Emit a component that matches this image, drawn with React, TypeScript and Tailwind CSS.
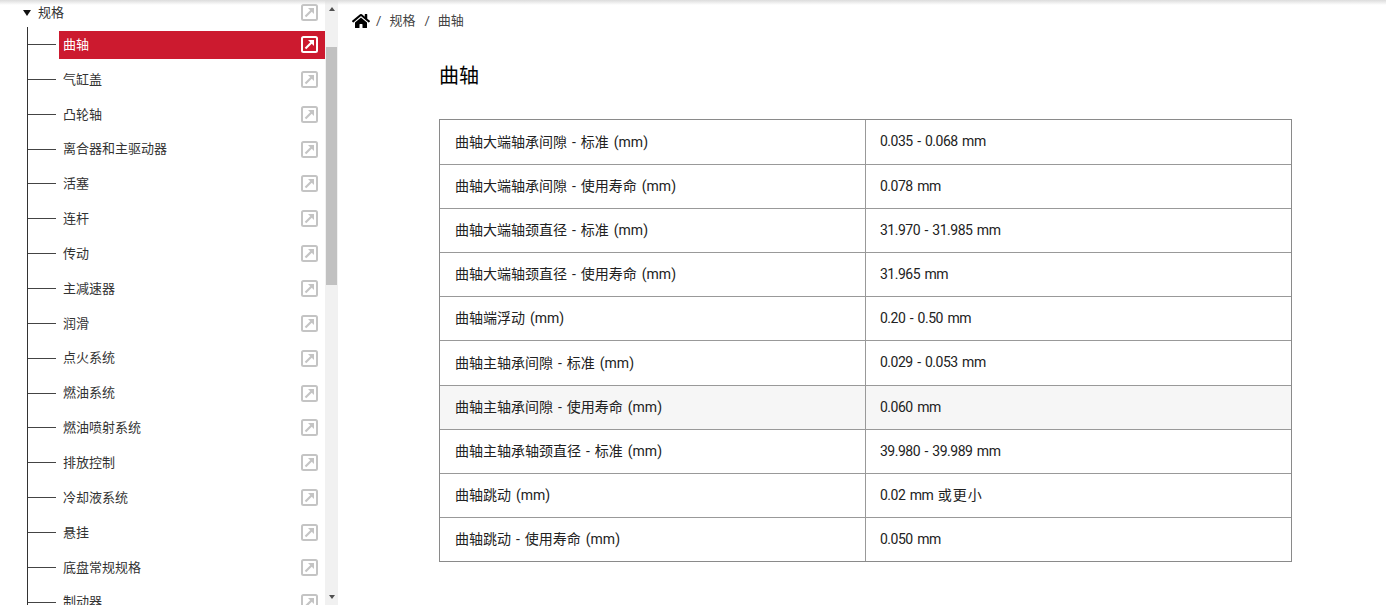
import type { ReactNode } from "react";
import { FaHome } from "react-icons/fa";

const FONT = "font-['Roboto','Noto_Sans_CJK_SC',sans-serif]";

const items = ["曲轴", "气缸盖", "凸轮轴", "离合器和主驱动器", "活塞", "连杆", "传动", "主减速器", "润滑", "点火系统", "燃油系统", "燃油喷射系统", "排放控制", "冷却液系统", "悬挂", "底盘常规规格", "制动器"];

const rows: [string, ReactNode][] = [
  ["曲轴大端轴承间隙 - 标准 (mm)", "0.035 - 0.068 mm"],
  ["曲轴大端轴承间隙 - 使用寿命 (mm)", "0.078 mm"],
  ["曲轴大端轴颈直径 - 标准 (mm)", "31.970 - 31.985 mm"],
  ["曲轴大端轴颈直径 - 使用寿命 (mm)", "31.965 mm"],
  ["曲轴端浮动 (mm)", "0.20 - 0.50 mm"],
  ["曲轴主轴承间隙 - 标准 (mm)", "0.029 - 0.053 mm"],
  ["曲轴主轴承间隙 - 使用寿命 (mm)", "0.060 mm"],
  ["曲轴主轴承轴颈直径 - 标准 (mm)", "39.980 - 39.989 mm"],
  ["曲轴跳动 (mm)", <>0.02 mm <span className="tracking-[1px]">或更小</span></>],
  ["曲轴跳动 - 使用寿命 (mm)", "0.050 mm"],
];

function LinkIcon({ active }: { active?: boolean }) {
  const c = active ? "#ffffff" : "#c4c4c4";
  return (
    <svg width="17" height="17" viewBox="0 0 17 17" fill="none" className="shrink-0">
      <rect x="1" y="1" width="15" height="15" rx="1.5" stroke={c} strokeWidth="2" />
      <path d="M4.5 12.5 L11 6" stroke={c} strokeWidth="2.2" />
      <path d="M7 4 H13 V10 Z" fill={c} />
    </svg>
  );
}

export default function App() {
  return (
    <div className={`relative flex h-[605px] w-[1386px] overflow-hidden bg-white text-[13px] text-[#222] ${FONT}`}>
      <div className="absolute inset-x-0 top-0 z-10 h-[5px] bg-gradient-to-b from-[#dcdcdc] to-transparent" />

      <aside className="flex h-full w-[338px] shrink-0">
        <div className="h-full w-[325px] overflow-hidden">
          <div className="flex h-[27.2px] items-center pb-[3px] pt-[1px]">
            <svg width="8" height="6" viewBox="0 0 8 6" className="ml-[23px]">
              <path d="M0 0 H8 L4 6 Z" fill="#111" />
            </svg>
            <span className="ml-[7px] flex-1 text-[#333]">规格</span>
            <span className="mr-[7px]"><LinkIcon /></span>
          </div>
          <ul className="ml-[27px] border-l border-[#333]">
            {items.map((t, i) => (
              <li key={t} className="flex h-[34.85px] items-center">
                <span className="h-px w-[28px] shrink-0 bg-[#444]" />
                <div className={`ml-[3px] flex h-[28px] flex-1 items-center justify-between pl-[4px] pr-[7px] ${i === 0 ? "bg-[#cc1a2f] text-white" : "text-[#333]"}`}>
                  <span>{t}</span>
                  <LinkIcon active={i === 0} />
                </div>
              </li>
            ))}
          </ul>
        </div>
        <div className="flex h-full w-[13px] flex-col items-center bg-[#f1f1f1]">
          <div className="flex h-[17px] w-full items-center justify-center">
            <svg width="6" height="4" viewBox="0 0 6 4"><path d="M3 0 L6 4 H0 Z" fill="#505050" /></svg>
          </div>
          <div className="mt-[30px] h-[238px] w-[11px] bg-[#c1c1c1]" />
          <div className="flex-1" />
          <div className="flex h-[17px] w-full items-center justify-center">
            <svg width="6" height="4" viewBox="0 0 6 4"><path d="M0 0 H6 L3 4 Z" fill="#505050" /></svg>
          </div>
        </div>
      </aside>

      <main className="flex-1">
        <nav className="ml-[14px] mt-[12px] flex h-[18px] items-center text-[#444]">
          <FaHome className="text-[18px] text-black" />
          <span className="ml-[6px]">/</span>
          <span className="ml-[8px]">规格</span>
          <span className="ml-[9px]">/</span>
          <span className="ml-[8px]">曲轴</span>
        </nav>
        <h1 className="ml-[101px] mt-[31px] h-[30px] text-[20px] font-normal leading-[30px] text-black">曲轴</h1>
        <div className="ml-[101px] mt-[28px] w-[853px] border border-[#8a8a8a] text-[14px]">
          {rows.map(([a, b], i) => (
            <div key={a} className={`grid h-[44.1px] grid-cols-[426px_1fr] ${i > 0 ? "border-t border-[#999]" : ""} ${i === 6 ? "bg-[#f6f6f6]" : ""}`}>
              <div className="flex items-center border-r border-[#999] pl-[15px] [word-spacing:1.5px]">{a}</div>
              <div className="pl-[14px] leading-[43px] tracking-[-0.5px] [word-spacing:1.5px]">{b}</div>
            </div>
          ))}
        </div>
      </main>
    </div>
  );
}
